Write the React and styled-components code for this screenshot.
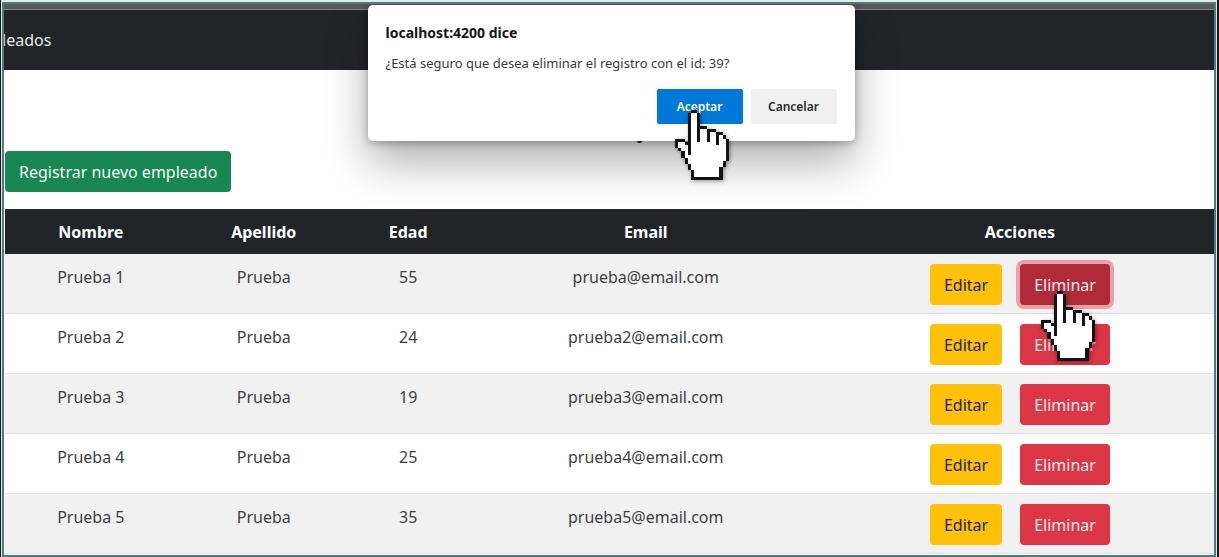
import React from "react";
import styled, { createGlobalStyle } from "styled-components";

const GlobalStyle = createGlobalStyle`
  *, *::before, *::after { box-sizing: border-box; }
  body {
    margin: 0;
    background: #16191b;
    color: #212529;
    font-family: "Noto Sans", "Open Sans", sans-serif;
    font-size: 16px;
    line-height: 26px;
  }
  button { font: inherit; cursor: pointer; }
`;

const Shell = styled.div`
  background: #e3e9e2;
  border-left: 1px solid #16191b;
  border-right: 2px solid #16191b;
  padding: 2px 1px 0;
`;

const Frame = styled.div`
  position: relative;
  border: 2px solid #4c7c80;
  background: #fff;
  overflow: hidden;
`;

const TopStrip = styled.div`
  height: 6px;
  background: #58595c;
  border-bottom: 1px solid #85878a;
`;

const Navbar = styled.nav`
  display: flex;
  align-items: center;
  height: 60px;
  background: #212529;
`;

const NavLink = styled.a`
  color: #e6e7e8;
  text-decoration: none;
  margin-left: -2px;
`;

const Main = styled.main`
  padding: 66px 0 1px 1px;
`;

const TitleArea = styled.div`
  display: flex;
  justify-content: center;
  padding-left: 60px;
  height: 15px;
`;

const TitleMark = styled.span`
  width: 5px;
  height: 7px;
  border-radius: 0 0 3px 3px;
  background: #212529;
`;

const tones = {
  success: { bg: "#198754", fg: "#f1f7f4" },
  warning: { bg: "#ffc107", fg: "#212529" },
  danger: { bg: "#dc3545", fg: "#fbeff0" },
};

const Button = styled.button`
  position: relative;
  height: 41px;
  padding: 0 14px;
  border: 0;
  border-radius: 4px;
  white-space: nowrap;
  background: ${(p) => (p.$pressed ? "#b02a37" : tones[p.$tone].bg)};
  color: ${(p) => tones[p.$tone].fg};
  box-shadow: ${(p) => (p.$pressed ? "0 0 0 4px #eaa0a8" : "none")};
  z-index: ${(p) => (p.$pressed ? 1 : "auto")};
`;

const Toolbar = styled.div`
  display: flex;
  padding-bottom: 17px;
`;

const Table = styled.table`
  width: 100%;
  table-layout: fixed;
  border-collapse: separate;
  border-spacing: 0;
  text-align: center;
`;

const Col = styled.col`
  width: ${(p) => p.$share}%;
`;

const HeadCell = styled.th`
  height: 45px;
  padding: 0;
  background: #212529;
  color: #fff;
  font-weight: 700;
`;

const Row = styled.tr`
  background: #fff;
  &:nth-child(odd) { background: #f1f1f1; }
`;

const Cell = styled.td`
  padding: 10px 0 8px;
  vertical-align: top;
  color: #3c3f42;
  border-bottom: 1px solid #dee2e6;
`;

const Actions = styled.div`
  display: flex;
  justify-content: center;
  gap: 18px;
`;

const Overlay = styled.div`
  position: absolute;
  inset: 1px 0 auto 4px;
  display: flex;
  justify-content: center;
`;

const Dialog = styled.section`
  width: 487px;
  max-width: 100%;
  padding: 17px 18px;
  border-radius: 5px;
  background: #fff;
  box-shadow: 0 2px 8px rgba(0, 0, 0, 0.3), 0 22px 44px rgba(0, 0, 0, 0.3);
`;

const DialogTitle = styled.h2`
  margin: 0;
  color: #151515;
  font-size: 14px;
  line-height: 22px;
  font-weight: 700;
`;

const DialogText = styled.p`
  margin: 8px 0 15px;
  color: #3a3a3a;
  font-size: 13px;
  line-height: 22px;
`;

const DialogActions = styled.div`
  display: flex;
  justify-content: flex-end;
  gap: 8px;
`;

const DialogButton = styled.button`
  position: relative;
  width: 86px;
  height: 35px;
  padding: 0;
  border: 0;
  border-radius: 2px;
  font-size: 12px;
  font-weight: 600;
  background: ${(p) => (p.$primary ? "#0078d7" : "#f0f0f0")};
  color: ${(p) => (p.$primary ? "#fff" : "#2a2a2a")};
`;

const Hand = styled.svg`
  position: absolute;
  z-index: 2;
  top: ${(p) => p.$top}px;
  left: ${(p) => p.$left}px;
  width: 54px;
  height: 70px;
  pointer-events: none;
  filter: drop-shadow(1px 1px 2px rgba(0, 0, 0, 0.4));
`;

const handPixels = [
  "     XX          ",
  "    XooX         ",
  "    XooX         ",
  "    XooX         ",
  "    XooX         ",
  "    XooXXX       ",
  "    XooXooXXX    ",
  "    XooXooXooXX  ",
  "    XooXooXooXoX ",
  "XXX XooXooXooXooX",
  "XooXXooooooooXooX",
  "XoooXoooooooooooX",
  " XooXoooooooooooX",
  "  XoXoooooooooooX",
  "  XoooooooooooooX",
  "   XooooooooooooX",
  "   XoooooooooooX ",
  "    XooooooooooX ",
  "    XoooooooooX  ",
  "     XooooooooX  ",
  "     XooooooooX  ",
  "     XXXXXXXXXX  ",
];

const tracePixels = (mark) =>
  handPixels
    .flatMap((line, y) =>
      [...line].map((c, x) => (c === mark ? `M${x} ${y}h1v1h-1z` : ""))
    )
    .join("");

const inkPath = tracePixels("X");
const fillPath = tracePixels("o");

function HandCursor({ top, left }) {
  return (
    <Hand
      $top={top}
      $left={left}
      viewBox="0 0 17 22"
      preserveAspectRatio="none"
      shapeRendering="crispEdges"
      aria-hidden="true"
    >
      <path d={fillPath} fill="#fff" />
      <path d={inkPath} fill="#141414" />
    </Hand>
  );
}

const columns = [
  { label: "Nombre", share: 14.2 },
  { label: "Apellido", share: 14.4 },
  { label: "Edad", share: 9.5 },
  { label: "Email", share: 29.8 },
  { label: "Acciones", share: 32.1 },
];

const employees = [
  { name: "Prueba 1", surname: "Prueba", age: 55, email: "prueba@email.com" },
  { name: "Prueba 2", surname: "Prueba", age: 24, email: "prueba2@email.com" },
  { name: "Prueba 3", surname: "Prueba", age: 19, email: "prueba3@email.com" },
  { name: "Prueba 4", surname: "Prueba", age: 25, email: "prueba4@email.com" },
  { name: "Prueba 5", surname: "Prueba", age: 35, email: "prueba5@email.com" },
];

export default function App() {
  return (
    <>
      <GlobalStyle />
      <Shell>
        <Frame>
          <TopStrip />
          <Navbar>
            <NavLink href="#">leados</NavLink>
          </Navbar>
          <Main>
            <TitleArea>
              <TitleMark />
            </TitleArea>
            <Toolbar>
              <Button type="button" $tone="success">
                Registrar nuevo empleado
              </Button>
            </Toolbar>
            <Table>
              <colgroup>
                {columns.map((c) => (
                  <Col key={c.label} $share={c.share} />
                ))}
              </colgroup>
              <thead>
                <tr>
                  {columns.map((c) => (
                    <HeadCell key={c.label} scope="col">
                      {c.label}
                    </HeadCell>
                  ))}
                </tr>
              </thead>
              <tbody>
                {employees.map((e, i) => (
                  <Row key={e.name}>
                    <Cell>{e.name}</Cell>
                    <Cell>{e.surname}</Cell>
                    <Cell>{e.age}</Cell>
                    <Cell>{e.email}</Cell>
                    <Cell>
                      <Actions>
                        <Button type="button" $tone="warning">
                          Editar
                        </Button>
                        <Button type="button" $tone="danger" $pressed={i === 0}>
                          Eliminar
                          {i === 0 && <HandCursor top={27} left={21} />}
                        </Button>
                      </Actions>
                    </Cell>
                  </Row>
                ))}
              </tbody>
            </Table>
          </Main>
          <Overlay>
            <Dialog role="dialog" aria-labelledby="confirm-title">
              <DialogTitle id="confirm-title">localhost:4200 dice</DialogTitle>
              <DialogText>
                ¿Está seguro que desea eliminar el registro con el id: 39?
              </DialogText>
              <DialogActions>
                <DialogButton type="button" $primary>
                  Aceptar
                  <HandCursor top={21} left={18} />
                </DialogButton>
                <DialogButton type="button">Cancelar</DialogButton>
              </DialogActions>
            </Dialog>
          </Overlay>
        </Frame>
      </Shell>
    </>
  );
}
